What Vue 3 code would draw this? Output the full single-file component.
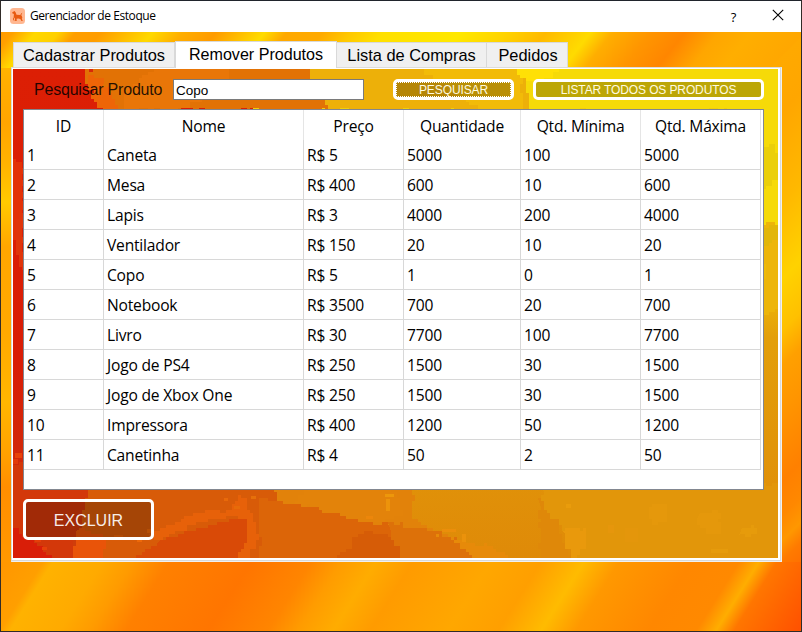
<script setup>
import { ref } from 'vue'

const tabs = ['Cadastrar Produtos', 'Remover Produtos', 'Lista de Compras', 'Pedidos']
const active = ref(1)
const search = ref('Copo')

const columns = ['ID', 'Nome', 'Preço', 'Quantidade', 'Qtd. Mínima', 'Qtd. Máxima']
const rows = [
  [1, 'Caneta', 'R$ 5', 5000, 100, 5000],
  [2, 'Mesa', 'R$ 400', 600, 10, 600],
  [3, 'Lapis', 'R$ 3', 4000, 200, 4000],
  [4, 'Ventilador', 'R$ 150', 20, 10, 20],
  [5, 'Copo', 'R$ 5', 1, 0, 1],
  [6, 'Notebook', 'R$ 3500', 700, 20, 700],
  [7, 'Livro', 'R$ 30', 7700, 100, 7700],
  [8, 'Jogo de PS4', 'R$ 250', 1500, 30, 1500],
  [9, 'Jogo de Xbox One', 'R$ 250', 1500, 30, 1500],
  [10, 'Impressora', 'R$ 400', 1200, 50, 1200],
  [11, 'Canetinha', 'R$ 4', 50, 2, 50],
]

// Colour stops of the flame backdrop: [position in px, colour]
const topStops = [
  [0, '#ff9a00'], [12, '#ffa000'], [35, '#ffd800'], [58, '#ffd000'], [75, '#ff9f00'], [100, '#ff9d00'],
  [152, '#ffd900'], [182, '#ffae00'], [215, '#ff9b00'], [264, '#ffdc00'], [286, '#ffa900'],
  [322, '#ffaa00'], [350, '#ffc800'], [382, '#ffe000'], [460, '#ffe800'], [505, '#ffd400'],
  [545, '#ffba00'], [590, '#ffdb00'], [612, '#ffae00'], [650, '#ff9500'], [684, '#ff8600'],
  [718, '#ffa600'], [750, '#ffae00'], [830, '#ffa300'],
]
const bottomStops = [
  [0, '#ff9600'], [42, '#ff9f00'], [52, '#ffb200'], [102, '#ffaa00'], [132, '#ff9b00'],
  [168, '#ff8000'], [250, '#ff7500'], [310, '#ff8500'], [340, '#ff9c00'], [375, '#ffac00'],
  [412, '#ff9b00'], [490, '#ffa700'], [540, '#ff9f00'], [583, '#ffbb00'], [618, '#ff9800'],
  [690, '#ff8700'], [738, '#ff8900'], [758, '#ffad00'], [776, '#ff7600'], [840, '#ff5200'],
]
const leftStops = [
  [0, '#ffc200'], [50, '#ffae00'], [90, '#ffa500'], [130, '#ffb200'], [170, '#ffca00'], [215, '#ffa600'],
  [300, '#ffa900'], [370, '#ffb600'], [420, '#ffa200'], [455, '#ff8e00'], [530, '#ff9800'], [599, '#ff9b00'],
]
const rightStops = [
  [0, '#ffaa00'], [70, '#ffa600'], [160, '#ffb800'], [238, '#ffd200'], [290, '#ffc000'], [325, '#ffa000'],
  [370, '#ff9500'], [440, '#ff8000'], [475, '#ff8800'], [500, '#ff9700'], [520, '#ff7a00'], [599, '#ff5500'],
]

// Turns a polygon into a blocky outline on a 3px grid.
function blocky(points, seed = 1, amp = 4) {
  let s = seed * 7919
  const rnd = () => {
    s = (s * 1103515245 + 12345) % 2147483648
    return s / 2147483648 - 0.5
  }
  const snap = (v) => Math.round(v / 3) * 3
  let d = ''
  points.forEach((p, i) => {
    const q = points[(i + 1) % points.length]
    const n = Math.max(1, Math.round(Math.hypot(q[0] - p[0], q[1] - p[1]) / 6))
    for (let k = 0; k < n; k++) {
      const j = k ? amp : 0
      const x = snap(p[0] + ((q[0] - p[0]) * k) / n + rnd() * j)
      const y = snap(p[1] + ((q[1] - p[1]) * k) / n + rnd() * j)
      d += d ? `H${x}V${y}` : `M${x} ${y}`
    }
  })
  return d + 'Z'
}

// Backdrop of the tab page, in page coordinates (765 x 489).
const patches = [
  { fill: '#e27205', d: blocky([[72, -6], [294, -6], [302, 18], [318, 42], [90, 42], [84, 15], [72, 12]], 2) },
  { fill: '#e97608', d: blocky([[150, -6], [220, -6], [215, 20], [165, 42], [110, 42], [110, 20]], 3) },
  { fill: '#ee6507', d: blocky([[75, 6], [86, 8], [100, 30], [105, 42], [84, 42]], 4) },
  { fill: '#edb009', d: blocky([[294, -6], [520, -6], [520, 42], [318, 42], [303, 20]], 5) },
  { fill: '#f2bb08', d: blocky([[400, -6], [505, -6], [510, 42], [470, 42]], 6) },
  { fill: '#f6da08', d: blocky([[508, -6], [771, -6], [771, 156], [735, 156], [735, 42], [520, 42]], 7) },
  { fill: '#ffe006', d: blocky([[504, -6], [560, -6], [532, 12], [508, 12]], 8) },
  { fill: '#ebcf0a', d: blocky([[738, 80], [756, 76], [771, 95], [760, 118], [738, 122]], 9) },
  { fill: '#edb50a', d: blocky([[750, 155], [771, 155], [771, 237], [750, 245]], 10) },
  { fill: '#e2b60a', d: blocky([[738, 160], [771, 155], [771, 166], [750, 180], [738, 240]], 11) },
  { fill: '#e33207', d: blocky([[-6, 88], [11, 93], [11, 140], [5, 170], [-6, 160]], 12) },
  { fill: '#e0350a', d: blocky([[3, 150], [11, 140], [11, 200], [6, 190]], 13) },
  { fill: '#d3380a', d: blocky([[-6, 395], [76, 384], [76, 430], [65, 460], [57, 495], [-6, 495]], 14) },
  { fill: '#d85b08', d: blocky([[76, 414], [270, 414], [390, 460], [500, 495], [57, 495], [66, 460]], 15) },
  { fill: '#e76109', d: blocky([[135, 466], [185, 444], [218, 440], [225, 425], [238, 445], [245, 470], [235, 495], [205, 495], [230, 465], [224, 448], [190, 452], [150, 472]], 16) },
  { fill: '#d94a07', d: blocky([[147, 470], [194, 456], [220, 449], [238, 451], [234, 474], [225, 495], [115, 495]], 17) },
  { fill: '#e95409', d: blocky([[68, 458], [95, 470], [91, 495], [55, 495]], 18) },
  { fill: '#d91e08', d: blocky([[-6, 459], [20, 473], [42, 495], [-6, 495]], 19) },
  { fill: '#e2820a', d: blocky([[258, 414], [400, 414], [398, 450], [420, 461], [508, 495], [330, 495], [300, 450], [266, 436]], 20) },
  { fill: '#dc6508', d: blocky([[247, 430], [302, 438], [346, 452], [374, 455], [410, 495], [247, 495]], 21) },
  { fill: '#d65c07', d: blocky([[315, 495], [350, 462], [383, 470], [393, 495]], 22) },
  { fill: '#e3830a', d: blocky([[300, 414], [375, 414], [390, 448], [365, 454], [333, 447], [281, 432]], 23) },
  { fill: '#dd7109', d: blocky([[375, 454], [415, 461], [445, 472], [471, 495], [394, 495]], 24) },
  { fill: '#e78a09', d: blocky([[417, 462], [447, 472], [475, 477], [500, 495], [471, 495], [447, 475]], 25) },
  { fill: '#e2960a', d: blocky([[528, 414], [771, 414], [771, 495], [562, 495], [550, 457], [532, 440]], 26) },
  { fill: '#df8809', d: blocky([[526, 430], [545, 457], [560, 495], [526, 495]], 27) },
  { fill: '#e9990c', d: blocky([[549, 461], [570, 460], [574, 476], [562, 495], [553, 470]], 28) },
  { fill: '#e5980b', d: blocky([[636, 438], [651, 435], [655, 452], [640, 456]], 29) },
  { fill: '#e5980b', d: blocky([[686, 443], [705, 443], [707, 465], [688, 460]], 30) },
  { fill: '#e69b0b', d: blocky([[728, 460], [743, 456], [745, 466], [727, 467]], 31) },
]

// Loose blocks scattered along the colour boundaries: x, y, w, h, fill
const specks = [
  [76, 0, 4, 3, '#d92808'], [85, 9, 6, 6, '#ec6507'], [309, 22, 3, 5, '#e8a406'],
  [221, 437, 6, 3, '#e76b09'], [238, 427, 5, 3, '#e6700a'], [101, 466, 9, 3, '#e76109'],
  [124, 468, 5, 5, '#ed6808'], [134, 460, 5, 4, '#ed6808'], [211, 429, 4, 3, '#e8690a'],
  [372, 425, 9, 3, '#ed970b'], [373, 430, 4, 12, '#ed930b'], [353, 447, 7, 3, '#ec860b'],
  [449, 465, 4, 8, '#eb920b'], [429, 460, 14, 3, '#eb8e0b'], [553, 435, 5, 4, '#e99c0c'],
  [595, 456, 6, 8, '#e6960c'], [612, 459, 13, 14, '#e4960b'], [698, 480, 17, 4, '#e69b0c'],
  [22, 470, 6, 3, '#e73d09'], [29, 478, 5, 3, '#e7400a'],
  [2, 384, 7, 5, '#e8430a'], [0, 390, 5, 5, '#e23a0a'],
]
</script>

<template>
  <div class="window">
    <header class="titlebar">
      <svg class="app-icon" viewBox="0 0 15 16" width="15" height="16">
        <rect width="15" height="16" rx="3.5" fill="#ffb791" />
        <path d="M2.3 4.2 4.6 3l1.1 1.6.8 2.2 3.8.2 1.5.9.5 1.8-.5 1.1 1 2.1h-1.3l-1.2-2-2-.4-1.7.3.1 2.3H5.2l-.4-2.8L3.7 9l.2-3.1-1.6-.6Z" fill="#e85a12" />
        <path d="m10.8 8 .3-2 1-.8M4.2 9.2l-1 1.8 1 1.7" fill="none" stroke="#e85a12" stroke-width=".9" />
      </svg>
      <span class="title">Gerenciador de Estoque</span>
      <button class="sys help" type="button">?</button>
      <button class="sys" type="button" aria-label="Fechar">
        <svg class="close" viewBox="0 0 12 12" width="12" height="12">
          <path d="M.8.8l10.4 10.4M11.2.8L.8 11.2" stroke="#000" stroke-width="1.1" fill="none" />
        </svg>
      </button>
    </header>

    <div class="client">
      <svg class="flames" viewBox="0 0 800 599" preserveAspectRatio="none">
        <defs>
          <linearGradient id="flameTop" gradientUnits="userSpaceOnUse" x1="0" y1="0" x2="850" y2="0">
            <stop v-for="s in topStops" :key="s[0]" :offset="s[0] / 850" :stop-color="s[1]" />
          </linearGradient>
          <linearGradient id="flameBottom" gradientUnits="userSpaceOnUse" x1="0" y1="0" x2="850" y2="0">
            <stop v-for="s in bottomStops" :key="s[0]" :offset="s[0] / 850" :stop-color="s[1]" />
          </linearGradient>
          <linearGradient id="flameLeft" gradientUnits="userSpaceOnUse" x1="0" y1="0" x2="0" y2="599">
            <stop v-for="s in leftStops" :key="s[0]" :offset="s[0] / 599" :stop-color="s[1]" />
          </linearGradient>
          <linearGradient id="flameRight" gradientUnits="userSpaceOnUse" x1="0" y1="0" x2="0" y2="599">
            <stop v-for="s in rightStops" :key="s[0]" :offset="s[0] / 599" :stop-color="s[1]" />
          </linearGradient>
        </defs>
        <g transform="skewX(-38)">
          <rect width="900" height="45" fill="url(#flameTop)" />
        </g>
        <rect y="36" width="20" height="500" fill="url(#flameLeft)" />
        <g transform="translate(790 0) skewY(-45)">
          <rect x="-20" y="15" width="40" height="584" fill="url(#flameRight)" />
        </g>
        <g transform="translate(0 530) skewX(-32)">
          <rect width="900" height="70" fill="url(#flameBottom)" />
        </g>
      </svg>

      <div class="tabs-area">
        <nav class="tabs">
          <button
            v-for="(tab, i) in tabs"
            :key="tab"
            type="button"
            class="tab"
            :class="[`tab-${i}`, { active: i === active }]"
            @click="active = i"
          >{{ tab }}</button>
        </nav>

        <section class="pane">
          <svg class="mosaic" viewBox="0 0 765 489" shape-rendering="crispEdges">
            <defs>
              <linearGradient id="left" x1="0" y1="0" x2="0" y2="1">
                <stop offset="0" stop-color="#dc1f05" />
                <stop offset=".6" stop-color="#d91d05" />
                <stop offset=".85" stop-color="#cf2c0b" />
                <stop offset="1" stop-color="#cf420b" />
              </linearGradient>
              <linearGradient id="right" x1="0" y1="0" x2="0" y2="1">
                <stop offset="0" stop-color="#f4d407" />
                <stop offset=".45" stop-color="#efb808" />
                <stop offset=".55" stop-color="#e39f0a" />
                <stop offset="1" stop-color="#df8a08" />
              </linearGradient>
            </defs>
            <rect width="765" height="489" fill="url(#right)" />
            <rect width="240" height="489" fill="url(#left)" />
            <path v-for="(p, i) in patches" :key="i" :d="p.d" :fill="p.fill" />
            <rect v-for="(s, i) in specks" :key="`s${i}`" :x="s[0]" :y="s[1]" :width="s[2]" :height="s[3]" :fill="s[4]" />
          </svg>

          <div class="page">
            <form class="search" @submit.prevent>
              <label for="produto">Pesquisar Produto</label>
              <input id="produto" v-model="search" type="text" />
              <button class="btn find focused" type="submit"><span>PESQUISAR</span></button>
              <button class="btn all" type="button"><span>LISTAR TODOS OS PRODUTOS</span></button>
            </form>

            <div class="grid">
              <div class="row head">
                <div v-for="c in columns" :key="c" class="cell">{{ c }}</div>
              </div>
              <div v-for="r in rows" :key="r[0]" class="row">
                <div v-for="(v, i) in r" :key="i" class="cell">{{ v }}</div>
              </div>
            </div>

            <button class="btn delete" type="button">EXCLUIR</button>
          </div>
        </section>
      </div>
    </div>
  </div>
</template>

<style>
body {
  margin: 0;
  overflow: hidden;
}
</style>

<style scoped>
* {
  box-sizing: border-box;
}
button {
  margin: 0;
  padding: 0;
  font: inherit;
}
.window {
  width: 802px;
  height: 632px;
  display: flex;
  flex-direction: column;
  border: 1px solid #302b28;
  border-top-color: #20242c;
  font-family: "Liberation Sans", Arial, sans-serif;
  color: #000;
}
.titlebar {
  flex: none;
  height: 31px;
  display: flex;
  align-items: center;
  background: #fff;
  padding-left: 9px;
}
.app-icon {
  margin-bottom: 2px;
}
.title {
  flex: 1;
  margin: -1px 0 0 5px;
  font: 12px/16px "Open Sans", "Noto Sans", sans-serif;
  letter-spacing: -0.43px;
}
.sys {
  width: 45px;
  height: 30px;
  display: grid;
  place-items: center;
  border: 0;
  background: none;
}
.close {
  margin: 0 2px 3px 0;
}
.help {
  font: 500 13px/28px "Open Sans", sans-serif;
}
.client {
  flex: 1;
  min-height: 0;
  display: grid;
}
.flames {
  grid-area: 1 / 1;
  width: 800px;
  height: 599px;
  background: #ffa000;
}
.tabs-area {
  grid-area: 1 / 1;
  z-index: 1;
  width: 771px;
  margin: 9px 0 0 10px;
}
.tabs {
  height: 26px;
  display: flex;
  align-items: flex-end;
  padding-left: 2px;
}
.tab {
  height: 25px;
  border: 1px solid #d9d9d9;
  border-left-width: 0;
  border-bottom: 0;
  background: #f0f0f0;
  font-size: 16.4px;
  line-height: 23px;
  white-space: nowrap;
}
.tab-0 {
  width: 162px;
  border-left-width: 1px;
}
.tab-1 {
  width: 162px;
}
.tab-2 {
  width: 150px;
}
.tab-3 {
  width: 81px;
  padding-left: 2px;
}
.tab.active {
  height: 27px;
  padding-bottom: 2px;
  background: #fff;
  border-left-width: 1px;
  margin-bottom: -1px;
  font-size: 16.1px;
  z-index: 1;
}
.pane {
  height: 495px;
  display: grid;
  padding: 1px 3px 3px 1px;
  border: 1px solid #dcdcdc;
  border-right-color: #f0f0f0;
  border-bottom-color: #f0f0f0;
  background: #fff;
  box-shadow: inset -1px -1px #d9d9d9;
}
.mosaic {
  grid-area: 1 / 1;
  width: 765px;
  height: 489px;
}
.page {
  grid-area: 1 / 1;
  z-index: 1;
  display: flex;
  flex-direction: column;
  align-items: flex-start;
  gap: 9px;
  padding: 10px 0 0 10px;
}
.search {
  height: 21px;
  display: flex;
  align-items: center;
}
.search label {
  width: 139px;
  margin: 0 0 0 11px;
  font-size: 16px;
  line-height: 21px;
  letter-spacing: -0.2px;
  color: rgba(0, 0, 0, 0.85);
  white-space: nowrap;
}
.search input {
  width: 191px;
  height: 21px;
  padding: 1px 2px 0;
  border: 1px solid #7a7a7a;
  background: #fff;
  font: 13.5px/18px "Liberation Sans", Arial, sans-serif;
  outline: 0;
}
.btn {
  display: grid;
  border: 3px solid #fff;
  border-radius: 5px;
  background: rgba(0, 0, 0, 0.235);
  color: #fff;
}
.find,
.all {
  height: 21px;
  font-size: 12px;
  line-height: 16px;
  color: #fffbe0;
}
.find {
  width: 121px;
  margin-left: 29px;
  letter-spacing: -0.1px;
}
.all {
  width: 231px;
  margin-left: 19px;
  letter-spacing: -0.12px;
}
.find span {
  height: 15px;
  outline: 1px dotted #fff;
  outline-offset: -1px;
}
.delete {
  width: 131px;
  height: 41px;
  font-size: 16px;
  line-height: 37px;
  color: rgba(255, 255, 255, 0.92);
}
.grid {
  width: 741px;
  height: 381px;
  border: 1px solid #828790;
  background: #fff;
  font: 15.6px/28px "Open Sans", "Noto Sans", sans-serif;
  letter-spacing: -0.2px;
}
.row {
  height: 30px;
  display: grid;
  grid-template-columns: 80px 200px 100px 117px 120px 120px;
}
.cell {
  padding: 1px 3px 0;
  border-right: 1px solid #d8d8d8;
  border-bottom: 1px solid #d8d8d8;
  white-space: nowrap;
}
.head .cell {
  padding-top: 2px;
  text-align: center;
  border-bottom: 0;
  border-right-color: #e5e5e5;
}
</style>
